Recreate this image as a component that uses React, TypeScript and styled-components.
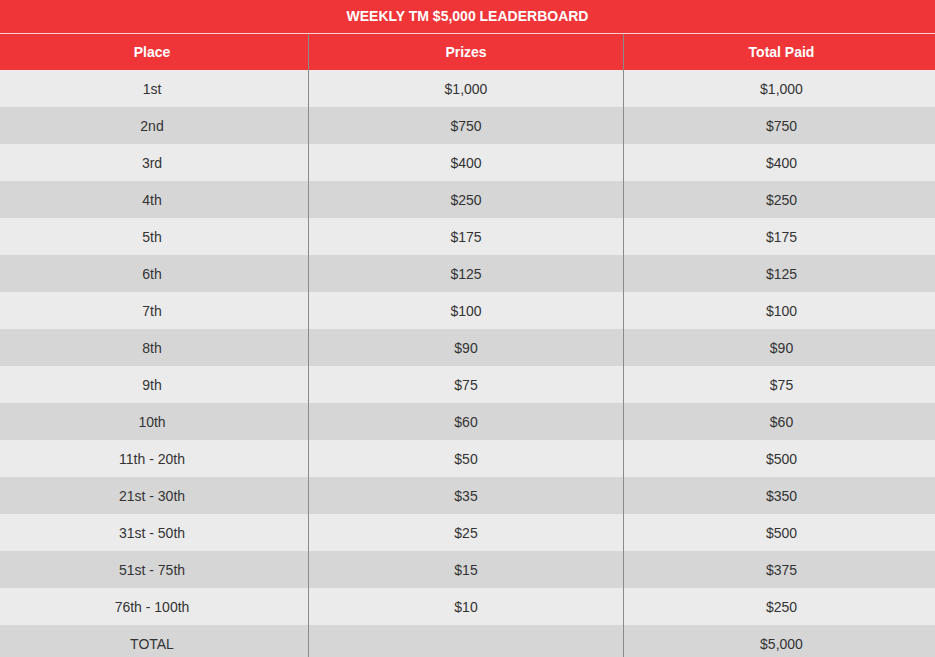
import React from "react";
import styled, { createGlobalStyle } from "styled-components";

const Global = createGlobalStyle`
  html, body { margin: 0; padding: 0; background: #ffffff; }
  body { font-family: Arial, "Liberation Sans", Helvetica, sans-serif; }
`;

const Board = styled.div`
  width: 935px;
  display: flex;
  flex-direction: column;
  color: #333333;
  font-size: 14px;
`;

const Title = styled.div`
  height: 32px;
  padding-bottom: 1px;
  background: #ef3538;
  color: #ffffff;
  font-weight: bold;
  font-size: 14px;
  display: flex;
  align-items: center;
  justify-content: center;
  border-bottom: 1px solid #f6d0d1;
`;

const Row = styled.div<{ $bg: string; $h: number }>`
  display: grid;
  grid-template-columns: 308px 315px 1fr;
  height: ${(p) => p.$h}px;
  background: ${(p) => p.$bg};
`;

const Cell = styled.div<{ $head?: boolean; $col: number }>`
  display: flex;
  align-items: center;
  justify-content: center;
  border-left: ${(p) => (p.$col === 0 ? "none" : "1px solid #8a8a8a")};
  padding-right: ${(p) => (p.$col === 0 ? "4px" : "0")};
  padding-left: ${(p) => (p.$col === 2 ? "4px" : "0")};
  color: ${(p) => (p.$head ? "#ffffff" : "#333333")};
  font-weight: ${(p) => (p.$head ? "bold" : "normal")};
`;

const rows: [string, string, string][] = [
  ["1st", "$1,000", "$1,000"],
  ["2nd", "$750", "$750"],
  ["3rd", "$400", "$400"],
  ["4th", "$250", "$250"],
  ["5th", "$175", "$175"],
  ["6th", "$125", "$125"],
  ["7th", "$100", "$100"],
  ["8th", "$90", "$90"],
  ["9th", "$75", "$75"],
  ["10th", "$60", "$60"],
  ["11th - 20th", "$50", "$500"],
  ["21st - 30th", "$35", "$350"],
  ["31st - 50th", "$25", "$500"],
  ["51st - 75th", "$15", "$375"],
  ["76th - 100th", "$10", "$250"],
  ["TOTAL", "", "$5,000"],
];

export default function App() {
  return (
    <>
      <Global />
      <Board>
        <Title>WEEKLY TM $5,000 LEADERBOARD</Title>
        <Row $bg="#ef3538" $h={36}>
          <Cell $head $col={0}>Place</Cell>
          <Cell $head $col={1}>Prizes</Cell>
          <Cell $head $col={2}>Total Paid</Cell>
        </Row>
        {rows.map((r, i) => (
          <Row key={i} $bg={i % 2 === 0 ? "#ebebeb" : "#d6d6d6"} $h={37}>
            <Cell $col={0}>{r[0]}</Cell>
            <Cell $col={1}>{r[1]}</Cell>
            <Cell $col={2}>{r[2]}</Cell>
          </Row>
        ))}
      </Board>
    </>
  );
}
